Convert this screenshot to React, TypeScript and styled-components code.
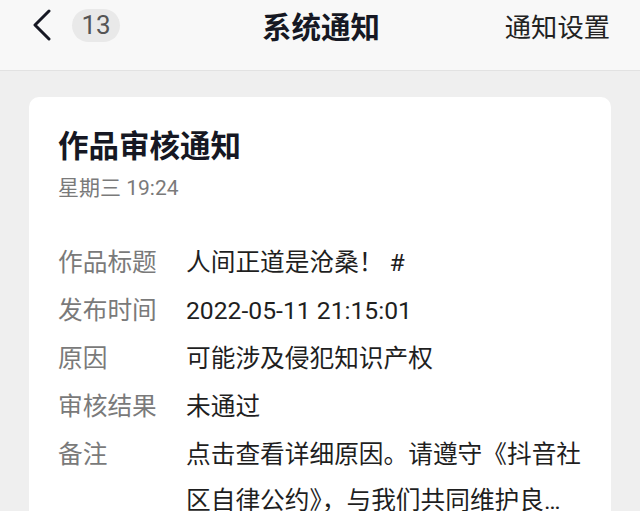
import { Fragment } from "react";
import styled, { createGlobalStyle } from "styled-components";

const GlobalStyle = createGlobalStyle`
  html, body {
    margin: 0;
    padding: 0;
    background: #efefef;
    font-family: Roboto, "Noto Sans CJK SC", sans-serif;
  }
`;

const Page = styled.div`
  width: 640px;
  height: 511px;
  overflow: hidden;
  background: #efefef;
`;

const Header = styled.header`
  height: 71px;
  box-sizing: border-box;
  background: #f8f8f8;
  border-bottom: 1px solid #e2e2e2;
  padding: 0 30px 20px 32px;
`;

const HeaderBar = styled.div`
  height: 50px;
  display: grid;
  grid-template-columns: 1fr auto 1fr;
  align-items: center;
`;

const HeaderLeft = styled.div`
  display: flex;
  align-items: center;
  gap: 20px;
`;

const BackButton = styled.button`
  border: none;
  background: none;
  padding: 0;
  display: flex;
  cursor: pointer;
`;

const Badge = styled.span`
  height: 33px;
  width: 48px;
  border-radius: 17px;
  background: #e9e9e9;
  color: #555;
  font-size: 26px;
  display: flex;
  align-items: center;
  justify-content: center;
`;

const Title = styled.h1`
  margin: 0;
  font-size: 29.5px;
  font-weight: 700;
  color: #161823;
`;

const Settings = styled.a`
  justify-self: end;
  font-size: 26.3px;
  color: #222;
  text-decoration: none;
`;

const Body = styled.main`
  padding: 26px 29px 0;
`;

const Card = styled.section`
  background: #fff;
  border-radius: 10px;
  padding: 30px 29px 20px;
  min-height: 480px;
`;

const CardTitle = styled.h2`
  margin: 0;
  font-size: 30.5px;
  font-weight: 700;
  line-height: 40px;
  color: #161823;
`;

const Time = styled.div`
  margin-top: 7px;
  font-size: 21px;
  line-height: 28px;
  color: #7a7a7a;
`;

const Fields = styled.dl`
  margin: 43px 0 0;
  display: grid;
  grid-template-columns: 128px 1fr;
  row-gap: 12px;
  font-size: 24.7px;
  line-height: 36px;
`;

const Label = styled.dt`
  color: #7a7a7a;
`;

const Value = styled.dd<{ $clamp?: boolean }>`
  margin: 0;
  color: #1f1f1f;
  line-height: ${(p) => (p.$clamp ? "46px" : "36px")};
  margin-top: ${(p) => (p.$clamp ? "-5px" : "0")};
  ${(p) =>
    p.$clamp &&
    `
    display: -webkit-box;
    -webkit-line-clamp: 2;
    -webkit-box-orient: vertical;
    overflow: hidden;
  `}
`;

const rows = [
  { label: "作品标题", value: "人间正道是沧桑！ #" },
  { label: "发布时间", value: "2022-05-11 21:15:01" },
  { label: "原因", value: "可能涉及侵犯知识产权" },
  { label: "审核结果", value: "未通过" },
];

export default function App() {
  return (
    <Page>
      <GlobalStyle />
      <Header>
        <HeaderBar>
          <HeaderLeft>
            <BackButton aria-label="返回">
              <svg width="20" height="32" viewBox="0 0 20 32" fill="none">
                <path
                  d="M17 2 L3 16 L17 30"
                  stroke="#161823"
                  strokeWidth="3"
                  strokeLinecap="round"
                  strokeLinejoin="round"
                />
              </svg>
            </BackButton>
            <Badge>13</Badge>
          </HeaderLeft>
          <Title>系统通知</Title>
          <Settings>通知设置</Settings>
        </HeaderBar>
      </Header>
      <Body>
        <Card>
          <CardTitle>作品审核通知</CardTitle>
          <Time>星期三 19:24</Time>
          <Fields>
            {rows.map((r) => (
              <Fragment key={r.label}>
                <Label>{r.label}</Label>
                <Value>{r.value}</Value>
              </Fragment>
            ))}
            <Label>备注</Label>
            <Value $clamp>
              点击查看详细原因。请遵守《抖音社区自律公约》，与我们共同维护良好的社区氛围。
            </Value>
          </Fields>
        </Card>
      </Body>
    </Page>
  );
}
